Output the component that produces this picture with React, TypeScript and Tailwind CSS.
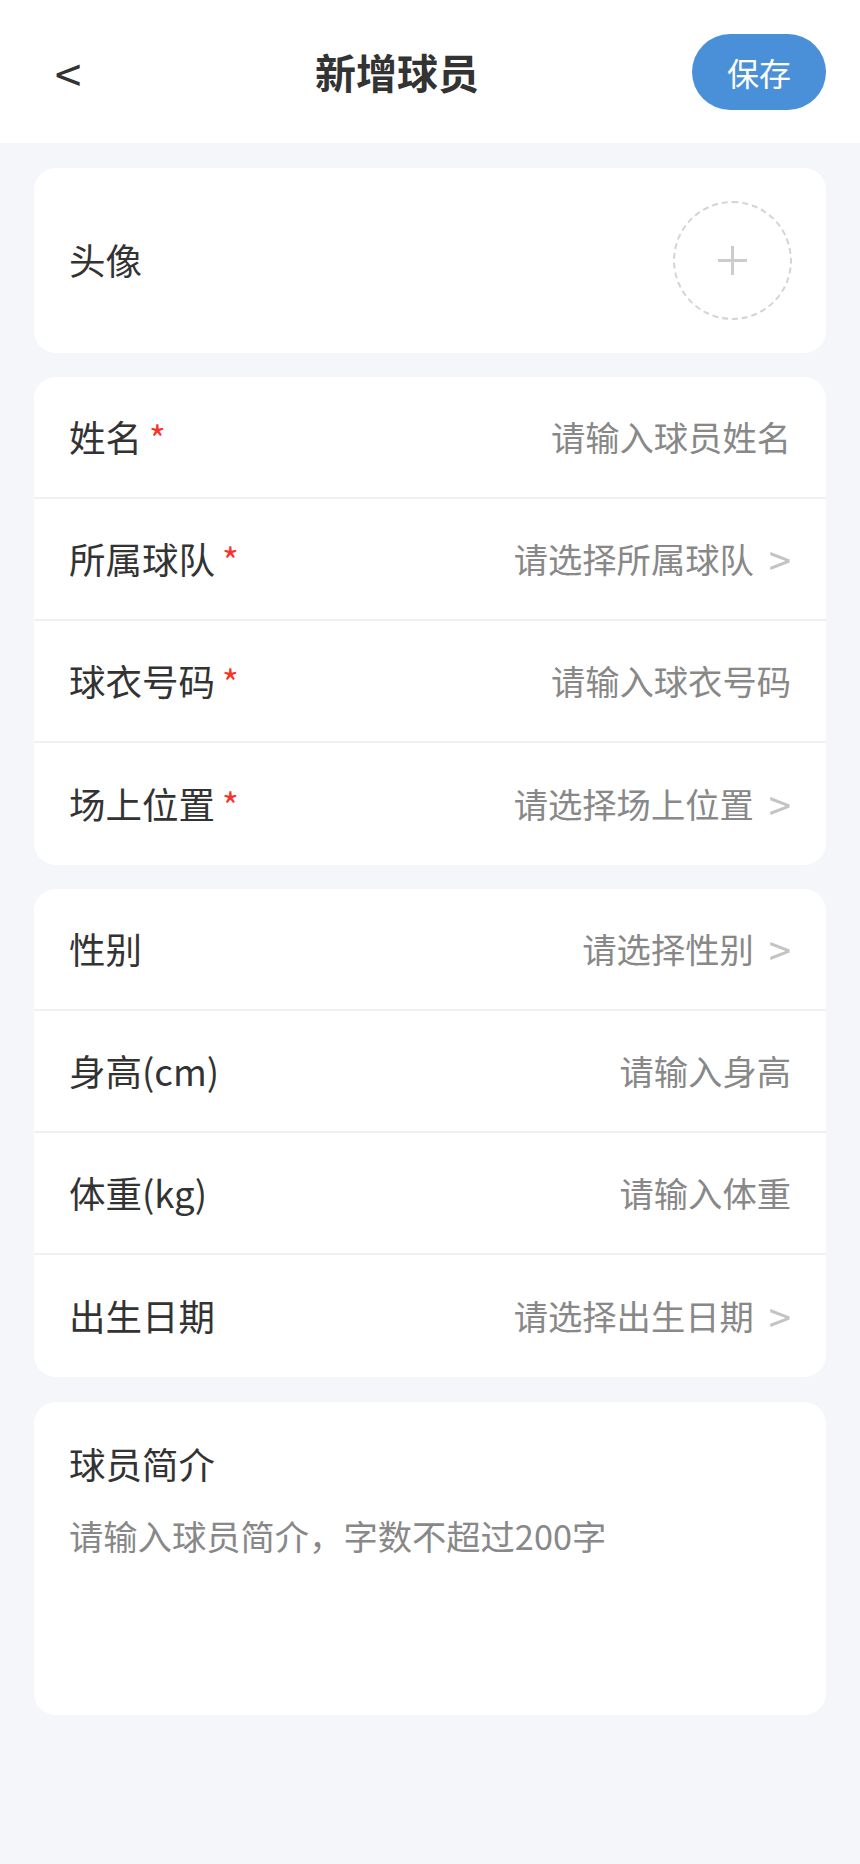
import React from "react";

const font = { fontFamily: '"Noto Sans CJK SC", "Noto Sans", sans-serif' };

type Row = {
  label: string;
  placeholder: string;
  required?: boolean;
  select?: boolean;
};

const basicRows: Row[] = [
  { label: "姓名", placeholder: "请输入球员姓名", required: true },
  { label: "所属球队", placeholder: "请选择所属球队", required: true, select: true },
  { label: "球衣号码", placeholder: "请输入球衣号码", required: true },
  { label: "场上位置", placeholder: "请选择场上位置", required: true, select: true },
];

const extraRows: Row[] = [
  { label: "性别", placeholder: "请选择性别", select: true },
  { label: "身高(cm)", placeholder: "请输入身高" },
  { label: "体重(kg)", placeholder: "请输入体重" },
  { label: "出生日期", placeholder: "请选择出生日期", select: true },
];

const FormRow = ({ row, last }: { row: Row; last: boolean }) => (
  <div
    className={`flex h-[122px] items-center justify-between pl-[35px] pr-[35px] ${
      last ? "" : "border-b-2 border-[#f0f0f2]"
    }`}
  >
    <div className="flex items-center text-[36.5px] text-[#333333]">
      <span>{row.label}</span>
      {row.required && (
        <span className="ml-[7px] text-[36px] leading-none text-[#f5352a]">*</span>
      )}
    </div>
    <div className="flex items-center text-[34.3px] text-[#888888]">
      <span>{row.placeholder}</span>
      {row.select && (
        <span className="ml-[15px] text-[40px] leading-none text-[#c4c4c4]">&gt;</span>
      )}
    </div>
  </div>
);

const Card = ({ rows }: { rows: Row[] }) => (
  <div className="mx-[34px] mt-[24px] overflow-hidden rounded-[22px] bg-white">
    {rows.map((row, i) => (
      <FormRow key={row.label} row={row} last={i === rows.length - 1} />
    ))}
  </div>
);

export default function App() {
  return (
    <div className="min-h-screen bg-[#f5f6fa] pb-[40px]" style={font}>
      <header className="flex h-[143px] items-center bg-white px-[34px]">
        <button className="flex w-[68px] items-center justify-center text-[48px] leading-none text-[#333333]">
          &lt;
        </button>
        <h1 className="flex-1 text-center text-[41px] font-bold text-[#333333]">
          新增球员
        </h1>
        <button className="flex h-[76px] w-[134px] items-center justify-center rounded-full bg-[#4a90d9] text-[32px] text-white">
          保存
        </button>
      </header>

      <div className="mx-[34px] mt-[25px] flex h-[185px] items-center justify-between rounded-[22px] bg-white pl-[35px] pr-[34px]">
        <span className="text-[36.5px] text-[#333333]">头像</span>
        <div className="relative flex h-[119px] w-[119px] items-center justify-center rounded-full border-2 border-dashed border-[#d4d4d4]">
          <div className="absolute h-[3px] w-[29px] bg-[#cccccc]" />
          <div className="absolute h-[29px] w-[3px] bg-[#cccccc]" />
        </div>
      </div>

      <Card rows={basicRows} />
      <Card rows={extraRows} />

      <div className="mx-[34px] mt-[25px] h-[313px] rounded-[22px] bg-white px-[35px] pt-[33px]">
        <div className="text-[36.5px] leading-[58px] text-[#333333]">球员简介</div>
        <div className="mt-[19px] text-[34.3px] leading-[46px] text-[#888888]">
          请输入球员简介，字数不超过200字
        </div>
      </div>
    </div>
  );
}
